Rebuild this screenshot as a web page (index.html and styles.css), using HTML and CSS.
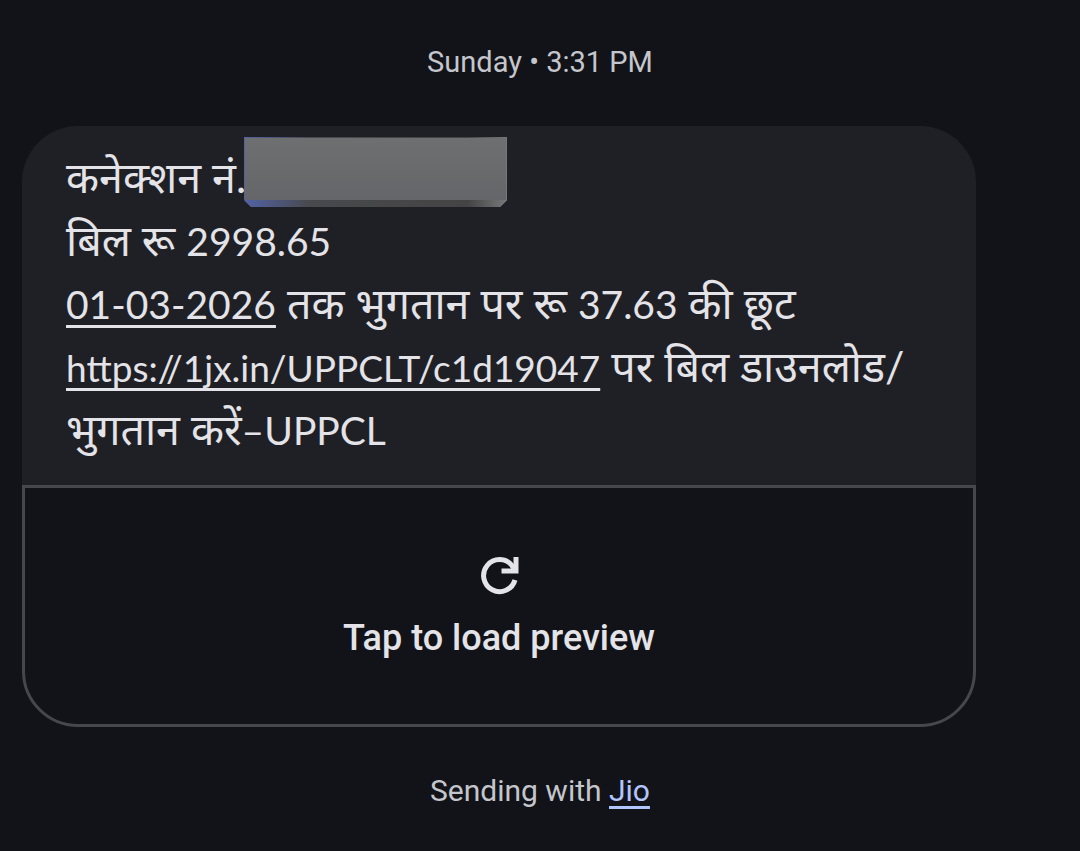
FILE: index.html
```html
<!DOCTYPE html>
<html lang="hi">
<head>
  <meta charset="utf-8">
  <meta name="viewport" content="width=device-width, initial-scale=1">
  <title>Messages</title>
  <link rel="stylesheet" href="styles.css">
</head>
<body>
  <main class="thread">
    <time class="timestamp">Sunday • 3:31 PM</time>

    <article class="message">
      <div class="bubble">
        <p class="line">कनेक्शन नं.<span class="redacted"></span></p>
        <p class="line">बिल रू <span class="latin">2998.65</span></p>
        <p class="line"><a class="latin" href="#">01-03-2026</a> तक भुगतान पर रू <span class="latin">37.63</span> की छूट</p>
        <p class="line"><a class="latin url" href="#">https://1jx.in/UPPCLT/c1d19047</a> पर बिल डाउनलोड/</p>
        <p class="line">भुगतान करें<span class="latin">–UPPCL</span></p>
      </div>
      <button type="button" class="preview">
        <svg class="reload" viewBox="0 0 40 40" aria-hidden="true">
          <path class="ring" d="M36 24A16 16 0 1 1 33 9.500L36 14"/>
          <path class="arrow" d="M37 1V15H22.500"/>
        </svg>
        <span>Tap to load preview</span>
      </button>
    </article>

    <p class="status">Sending with <a href="#">Jio</a></p>
  </main>
</body>
</html>
```
FILE: styles.css
```css
* {
  box-sizing: border-box;
}

body {
  margin: 0;
  min-height: 100vh;
  background: #121318;
  color: #e3e3e8;
  font-family: Lato, "Noto Sans", sans-serif;
}

.thread {
  padding: 42px 104px 0 22px;
}

.timestamp,
.status {
  display: block;
  margin: 0 -82px 0 0;
  text-align: center;
  font-family: Roboto, sans-serif;
  font-size: 29px;
  line-height: 40px;
  color: #c5c6cc;
}

.message {
  margin: 44px 0;
}

.bubble {
  padding: 19px 44px 25px;
  border-radius: 56px 56px 0 0;
  background: #1f2025;
}

.line {
  margin: 0;
  font-size: 43px;
  line-height: 63px;
  white-space: nowrap;
}

.latin {
  font-size: 39px;
  line-height: 1;
}

.url {
  font-size: 37px;
}

.line a {
  color: inherit;
  text-decoration-thickness: 3px;
  text-underline-offset: 6px;
  text-decoration-skip-ink: none;
}

/* grey slab over the connection number */
.redacted {
  display: inline-block;
  width: 263px;
  height: 70px;
  margin: -8px 0 1px -2px;
  vertical-align: bottom;
  border: 1px solid #808184;
  border-bottom: 7px solid #444547;
  border-image: linear-gradient(to right, #5263a6, #48494d 25%, #444444 85%, #77787a) 1 1 7 1;
  background: linear-gradient(#6e6f70, #656669);
  clip-path: polygon(0 0, 100% 0, 100% 63px, 256px 100%, 7px 100%, 0 63px);
}

.preview {
  display: flex;
  flex-direction: column;
  align-items: center;
  gap: 18px;
  width: 100%;
  padding: 68px 20px 62px;
  border: 3px solid #46474d;
  border-radius: 0 0 56px 56px;
  background: transparent;
  color: inherit;
  font-family: Roboto, sans-serif;
  font-size: 36px;
  font-weight: 500;
  line-height: 48px;
}

.reload {
  width: 40px;
  height: 40px;
  fill: none;
  stroke: currentColor;
}

.ring {
  stroke-width: 5;
}

.arrow {
  stroke-width: 5;
}

.status {
  font-size: 30px;
}

.status a {
  color: #b1c5ff;
  text-decoration-thickness: 3px;
  text-underline-offset: 5px;
  text-decoration-skip-ink: none;
}
```
